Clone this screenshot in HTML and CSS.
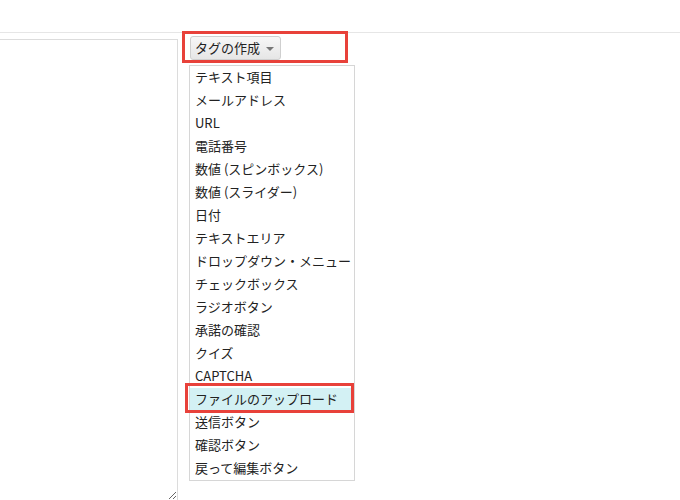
FILE: index.html
```html
<!DOCTYPE html>
<html lang="ja">
<head>
<meta charset="utf-8">
<link rel="stylesheet" href="styles.css">
</head>
<body>
<div class="topbar"></div>
<div class="main">
  <textarea class="editor"></textarea>
  <div class="tagcol">
    <button class="tagbtn">タグの作成 <span class="caret"></span></button>
    <ul class="menu">
      <li>テキスト項目</li>
      <li>メールアドレス</li>
      <li>URL</li>
      <li>電話番号</li>
      <li>数値 (スピンボックス)</li>
      <li>数値 (スライダー)</li>
      <li>日付</li>
      <li>テキストエリア</li>
      <li>ドロップダウン・メニュー</li>
      <li>チェックボックス</li>
      <li>ラジオボタン</li>
      <li>承諾の確認</li>
      <li>クイズ</li>
      <li>CAPTCHA</li>
      <li class="active">ファイルのアップロード</li>
      <li>送信ボタン</li>
      <li>確認ボタン</li>
      <li>戻って編集ボタン</li>
    </ul>
  </div>
</div>
<div class="mark mark-btn"></div>
<div class="mark mark-item"></div>
</body>
</html>
```
FILE: styles.css
```css
html, body {
  margin: 0;
  padding: 0;
  background: #fff;
  font-family: "Noto Sans CJK JP", "Noto Sans", sans-serif;
  color: #222;
  overflow: hidden;
}
.topbar {
  height: 32px;
  border-bottom: 1px solid #e6e6e6;
}
.main {
  display: flex;
  align-items: flex-start;
}
.editor {
  margin: 6px 0 0 -2px;
  width: 180px;
  height: 462px;
  box-sizing: border-box;
  border: 1px solid #dcdcdc;
  padding: 0;
  resize: both;
  font: inherit;
}
.tagcol {
  margin-left: 11px;
  margin-top: 3px;
  display: flex;
  flex-direction: column;
  align-items: flex-start;
}
.tagbtn {
  margin-left: 1px;
  width: 91px;
  height: 24px;
  box-sizing: border-box;
  border: 1px solid #cfcfcf;
  border-radius: 3px;
  background: linear-gradient(#f7f7f7, #e6e6e6);
  font-family: inherit;
  font-size: 13px;
  line-height: 20px;
  color: #222;
  padding: 0 0 1px 4px;
  text-align: left;
  display: flex;
  align-items: center;
  gap: 6px;
}
.caret {
  display: inline-block;
  width: 0;
  height: 0;
  border-left: 4px solid transparent;
  border-right: 4px solid transparent;
  border-top: 4px solid #777;
  margin-top: 2px;
}
.menu {
  list-style: none;
  margin: 5px 0 0 0;
  padding: 0;
  width: 166px;
  box-sizing: border-box;
  border: 1px solid #d6d6d6;
  background: #fff;
}
.menu li {
  height: 23px;
  box-sizing: border-box;
  line-height: 21px;
  padding: 0 0 2px 5px;
  font-size: 13px;
  white-space: nowrap;
  color: #222;
}
.menu li.active {
  background: #d3f1f4;
}
.mark {
  position: absolute;
  border: 3px solid #e8413a;
  box-sizing: border-box;
  pointer-events: none;
}
.mark-btn {
  left: 182px;
  top: 31px;
  width: 166px;
  height: 32px;
}
.mark-item {
  left: 185px;
  top: 383px;
  width: 169px;
  height: 30px;
}
```
